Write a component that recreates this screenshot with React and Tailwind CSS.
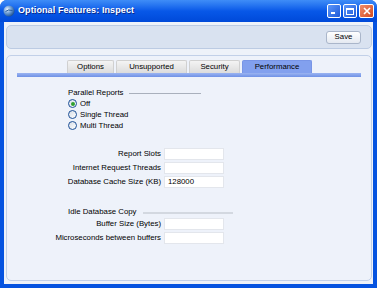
import React from "react";

const font = { fontFamily: '"Liberation Sans", Arial, sans-serif' };

function Radio({ checked, label }) {
  return (
    <div className="flex items-center h-[11px] gap-[3px]">
      <span className="w-[9px] h-[9px] rounded-full border border-[#1c4f96] bg-gradient-to-br from-[#d6dde6] to-white flex items-center justify-center">
        {checked && <span className="w-[4px] h-[4px] rounded-full bg-[#2fa02f]" />}
      </span>
      <span className="text-[7.8px] text-black leading-none">{label}</span>
    </div>
  );
}

function Field({ label, value }) {
  return (
    <div className="flex items-center h-[12px] gap-[3px]">
      <div className="w-[154px] text-right text-[7.8px] leading-none text-black">{label}</div>
      <div className="w-[60px] h-[12px] bg-white border border-[#e3e6ec] flex items-center pl-[3px] text-[7.8px] leading-none">
        {value}
      </div>
    </div>
  );
}

export default function App() {
  const tabs = [
    { name: "Options", w: "w-[47px]" },
    { name: "Unsupported", w: "w-[71px]" },
    { name: "Security", w: "w-[51px]" },
    { name: "Performance", w: "w-[70px]", active: true },
  ];

  return (
    <div style={font} className="w-[377px] h-[288px] flex flex-col bg-[#0553e0] rounded-t-[7px] overflow-hidden">
      {/* Title bar */}
      <div className="h-[22px] flex items-center px-[3px] bg-gradient-to-b from-[#3f8df7] via-[#0858e8] to-[#0049d9]">
        <svg width="12" height="12" viewBox="0 0 12 12" className="mr-[3px]">
          <defs>
            <radialGradient id="g" cx="35%" cy="35%" r="70%">
              <stop offset="0%" stopColor="#e8f2ff" />
              <stop offset="50%" stopColor="#6f9fd6" />
              <stop offset="100%" stopColor="#1c4f8f" />
            </radialGradient>
          </defs>
          <circle cx="6" cy="6" r="5.5" fill="url(#g)" />
          <path d="M2.5 6.5 Q5 4 9.5 5.5" stroke="#2a5f9e" strokeWidth="1" fill="none" />
        </svg>
        <span className="text-white font-bold text-[9px] tracking-[0.1px]" style={{ textShadow: "1px 1px 0 #0a2a8a" }}>
          Optional Features: Inspect
        </span>
        <div className="ml-auto flex gap-[2px]">
          <div className="w-[14px] h-[14px] rounded-[2px] border border-white bg-gradient-to-br from-[#5d97fa] to-[#1e58d8] flex items-end justify-start p-[3px]">
            <span className="w-[4px] h-[2px] bg-white" />
          </div>
          <div className="w-[14px] h-[14px] rounded-[2px] border border-white bg-gradient-to-br from-[#5d97fa] to-[#1e58d8] flex items-center justify-center">
            <span className="w-[8px] h-[7px] border border-white border-t-2" />
          </div>
          <div className="w-[15px] h-[14px] rounded-[2px] border border-white bg-gradient-to-br from-[#f08c6a] to-[#d24a1c] flex items-center justify-center">
            <svg width="8" height="8" viewBox="0 0 8 8">
              <path d="M1 1 L7 7 M7 1 L1 7" stroke="white" strokeWidth="1.6" />
            </svg>
          </div>
        </div>
      </div>

      {/* Body */}
      <div className="flex-1 mx-[4px] mb-[4px] bg-[#eef2f9] flex flex-col pl-[2px] pr-[1px] pt-[3px] pb-[3px] gap-[6px]">
        {/* Toolbar */}
        <div className="h-[24px] rounded-[5px] border border-[#bccbe3] bg-[#d9e2f0] flex items-center justify-end pr-[10px]">
          <div className="w-[35px] h-[13px] rounded-[3px] border border-[#aab6ca] bg-gradient-to-b from-white to-[#e4e9f1] flex items-center justify-center text-[7.8px] leading-none">
            Save
          </div>
        </div>

        {/* Main panel */}
        <div className="flex-1 rounded-[5px] border border-[#c2d0e8] bg-[#eef2fa] flex flex-col pt-[4px]">
          <div className="flex h-[13px] pl-[60px] gap-[2px]">
            {tabs.map((t) => (
              <div
                key={t.name}
                className={`${t.w} h-[13px] rounded-t-[2px] flex items-center justify-center text-[7.8px] leading-none text-black ${
                  t.active
                    ? "bg-[#82a0ee] border-t border-x border-[#7895e6]"
                    : "bg-gradient-to-b from-[#f4f4f4] to-[#dcdcdc] border-t border-x border-[#d0d0d0]"
                }`}
              >
                {t.name}
              </div>
            ))}
          </div>
          <div className="mx-[10px] h-[4px] bg-gradient-to-b from-[#9bb4f1] to-[#6f91e6]" />

          {/* Parallel Reports */}
          <div className="ml-[61px] mt-[10px] flex flex-col">
            <div className="flex items-center h-[11px]">
              <span className="text-[7.8px] leading-none">Parallel Reports</span>
              <span className="ml-[6px] w-[72px] h-px bg-[#a9b0bc] mt-[2px]" />
            </div>
            <Radio checked label="Off" />
            <Radio label="Single Thread" />
            <Radio label="Multi Thread" />
          </div>

          <div className="mt-[17px] flex flex-col gap-[2px]">
            <Field label="Report Slots" />
            <Field label="Internet Request Threads" />
            <Field label="Database Cache Size (KB)" value="128000" />
          </div>

          <div className="ml-[61px] mt-[18px] flex items-center h-[11px]">
            <span className="text-[7.8px] leading-none">Idle Database Copy</span>
            <span className="ml-[7px] w-[90px] h-[2px] bg-[#d3d8e0] mt-[3px]" />
          </div>

          <div className="mt-[1px] flex flex-col gap-[2px]">
            <Field label="Buffer Size (Bytes)" />
            <Field label="Microseconds between buffers" />
          </div>
        </div>
      </div>
    </div>
  );
}
